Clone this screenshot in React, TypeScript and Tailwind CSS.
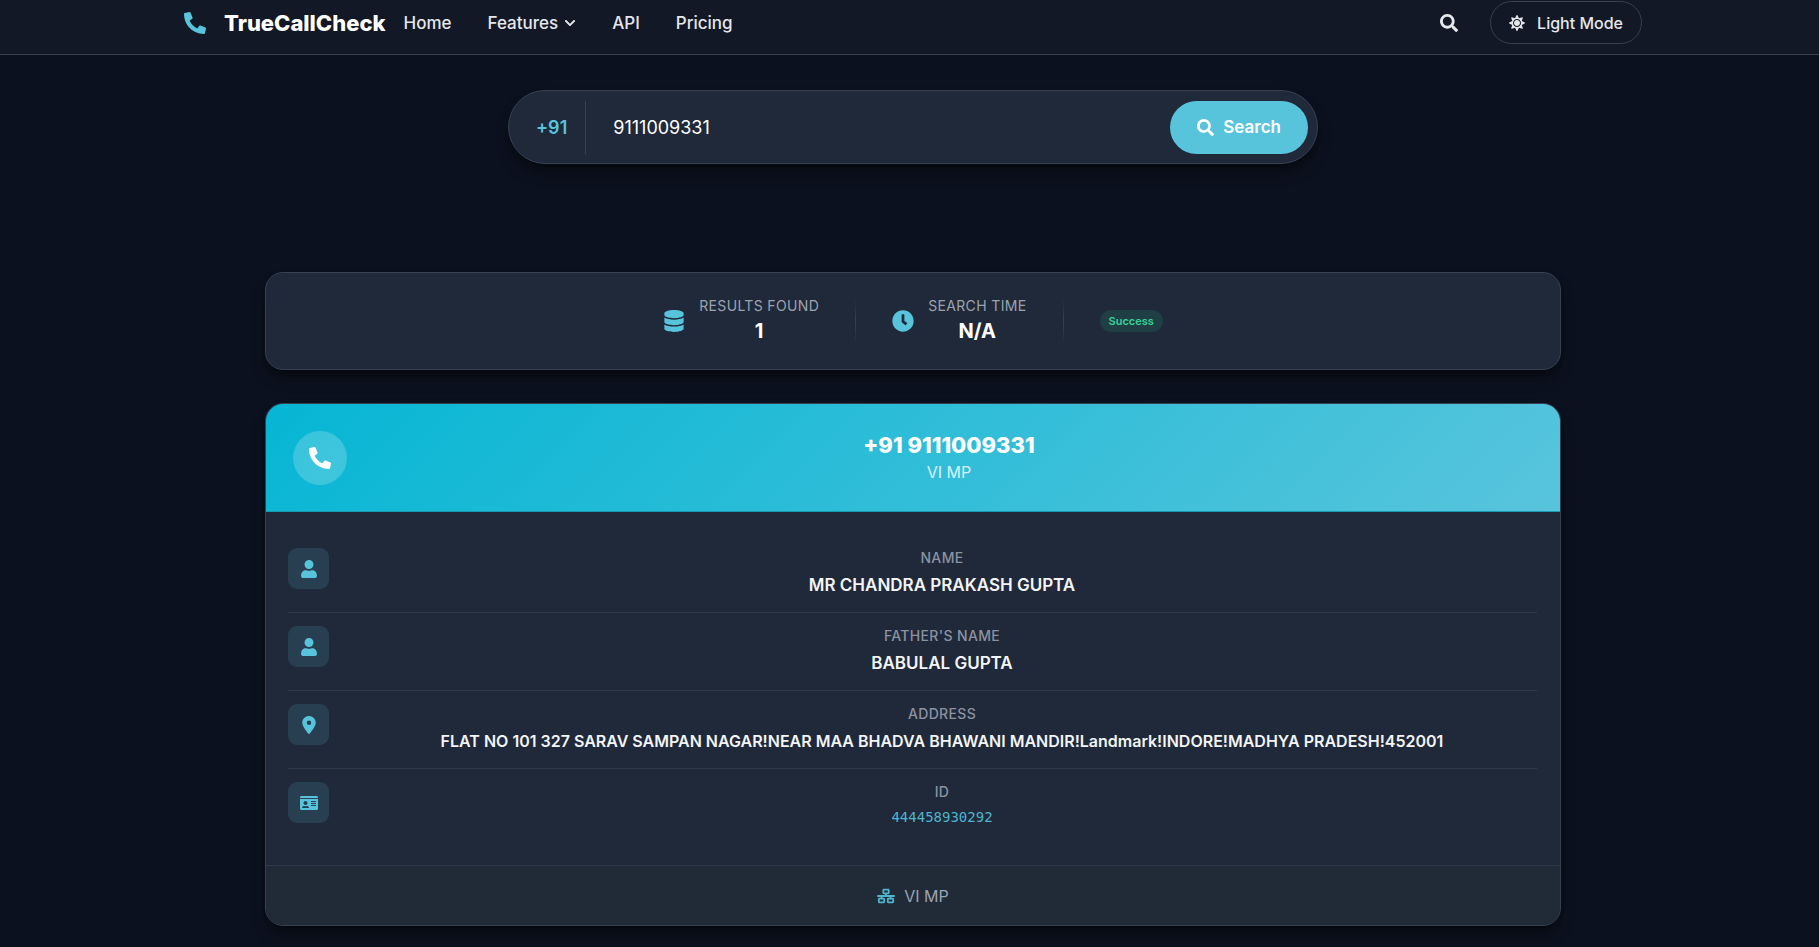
import { useState } from 'react'
import type { IconType } from 'react-icons'
import {
  FaChevronDown,
  FaClock,
  FaDatabase,
  FaIdCard,
  FaPhoneAlt,
  FaSearch,
  FaSun,
  FaUser,
} from 'react-icons/fa'
import { FaLocationDot, FaNetworkWired } from 'react-icons/fa6'

type DetailItem = {
  label: string
  value: string
  icon: IconType
  variant?: 'long' | 'mono'
}

const details: DetailItem[] = [
  { label: 'Name', value: 'MR CHANDRA PRAKASH GUPTA', icon: FaUser },
  { label: "Father's Name", value: 'BABULAL GUPTA', icon: FaUser },
  {
    label: 'Address',
    value: 'FLAT NO 101 327 SARAV SAMPAN NAGAR!NEAR MAA BHADVA BHAWANI MANDIR!Landmark!INDORE!MADHYA PRADESH!452001',
    icon: FaLocationDot,
    variant: 'long',
  },
  { label: 'ID', value: '444458930292', icon: FaIdCard, variant: 'mono' },
]

const valueStyles = {
  default: 'text-[17px] leading-[26px] font-semibold text-[#f3f4f6]',
  long: 'text-base leading-[26px] font-semibold text-[#f3f4f6]',
  mono: "font-['DejaVu_Sans_Mono',monospace] text-sm leading-[22px] text-[#4fb4cc]",
}

function Header() {
  return (
    <header className="border-b border-[#374151] bg-[#121826] pl-[7px]">
      <div className="mx-auto flex h-[54px] max-w-[1458px] items-start justify-between pt-px">
        <div className="flex h-[43px] items-center gap-[18px]">
          <a href="#" className="flex items-center gap-[18px] text-[22px] leading-8 font-extrabold text-white">
            <FaPhoneAlt className="text-[22px] text-[#58c4dc]" />
            TrueCallCheck
          </a>
          <nav className="flex items-center gap-9 text-[17px] leading-6 font-medium text-[#e5e7eb]">
            <a href="#">Home</a>
            <a href="#" className="flex items-center gap-1.5">
              Features
              <FaChevronDown className="text-xs" />
            </a>
            <a href="#">API</a>
            <a href="#">Pricing</a>
          </nav>
        </div>
        <div className="flex items-center gap-8 text-[#e5e7eb]">
          <button type="button" aria-label="Search">
            <FaSearch className="text-lg" />
          </button>
          <button
            type="button"
            className="flex h-[43px] items-center gap-3 rounded-full border border-[#374151] px-[18px] text-base font-medium"
          >
            <FaSun className="text-base" />
            Light Mode
          </button>
        </div>
      </div>
    </header>
  )
}

function SearchBar() {
  const [number, setNumber] = useState('9111009331')

  return (
    <form
      onSubmit={(e) => e.preventDefault()}
      className="mx-auto flex h-[74px] max-w-[810px] items-center rounded-full border border-[#374151] bg-[#1f293a] px-[9px] pt-[10px] pb-[9px] shadow-lg shadow-black/40"
    >
      <label
        htmlFor="phone"
        className="flex h-full items-center border-r border-[#374151] px-[18px] text-lg font-semibold text-[#58c4dc]"
      >
        +91
      </label>
      <input
        id="phone"
        type="tel"
        value={number}
        onChange={(e) => setNumber(e.target.value)}
        className="h-full min-w-0 flex-1 bg-transparent px-[27px] text-lg text-white outline-none"
      />
      <button
        type="submit"
        className="flex h-full items-center gap-[9px] rounded-full bg-[#58c4dc] px-[27px] text-[17px] font-semibold text-white"
      >
        <FaSearch />
        Search
      </button>
    </form>
  )
}

function Stat({ icon: Icon, label, value }: { icon: IconType; label: string; value: string }) {
  return (
    <div className="flex items-center gap-3.5">
      <Icon className="text-[22px] text-[#58c4dc]" />
      <div className="pb-0.5 text-center">
        <p className="text-sm leading-[22px] tracking-wide text-[#9ca3af] uppercase">{label}</p>
        <p className="text-xl leading-[28px] font-bold text-white">{value}</p>
      </div>
    </div>
  )
}

function StatDivider() {
  return <div className="h-[45px] w-px bg-linear-to-b from-transparent via-[#374151] to-transparent" />
}

function ResultStats() {
  return (
    <section className="flex h-[98px] items-center justify-center gap-9 rounded-[18px] border border-[#374151] bg-[#1f293a] shadow-lg shadow-black/40">
      <Stat icon={FaDatabase} label="Results Found" value="1" />
      <StatDivider />
      <Stat icon={FaClock} label="Search Time" value="N/A" />
      <StatDivider />
      <span className="rounded-full bg-[#1f3f44] px-[9px] text-[11px] leading-[22px] font-semibold text-[#34d399]">
        Success
      </span>
    </section>
  )
}

function DetailRow({ item }: { item: DetailItem }) {
  const Icon = item.icon

  return (
    <div className="flex items-start gap-[18px] border-b border-[#2f3b4b] pt-[13px] pb-3.5 last:border-b-0">
      <div className="flex size-[41px] items-center justify-center rounded-[9px] bg-[#283f52] text-lg text-[#58c4dc]">
        <Icon />
      </div>
      <dl className="flex-1 text-center">
        <dt className="text-sm leading-5 font-medium tracking-wide text-[#8b93a1] uppercase">{item.label}</dt>
        <dd className={`pt-1 ${valueStyles[item.variant ?? 'default']}`}>{item.value}</dd>
      </dl>
    </div>
  )
}

function ResultCard() {
  return (
    <article className="overflow-hidden rounded-[18px] border border-[#374151] bg-[#1f293a] shadow-lg shadow-black/40">
      <div className="flex h-[108px] items-center gap-[18px] border-b border-[#179bb2] bg-[linear-gradient(135deg,#06b6d4_0%,#58c4dc_100%)] px-[27px]">
        <div className="flex size-[54px] items-center justify-center rounded-full bg-white/20 text-[22px] text-white">
          <FaPhoneAlt />
        </div>
        <div className="flex-1 pb-px text-center">
          <h2 className="text-[22px] leading-[30px] font-extrabold text-white">+91 9111009331</h2>
          <p className="text-base leading-6 text-white/80">VI MP</p>
        </div>
      </div>
      <div className="py-[23px] pr-[23px] pl-[22px]">
        {details.map((item) => (
          <DetailRow key={item.label} item={item} />
        ))}
      </div>
      <div className="flex h-[60px] items-center justify-center gap-[9px] border-t border-[#2f3b4b] bg-[#212a37] text-base text-[#9ca3af]">
        <FaNetworkWired className="text-lg text-[#4fb4cc]" />
        VI MP
      </div>
    </article>
  )
}

export default function App() {
  return (
    <div className="min-h-screen bg-[#0b111e] font-['Inter',sans-serif]">
      <Header />
      <main className="pt-[35px] pl-[7px]">
        <SearchBar />
        <div className="mx-auto mt-[108px] flex max-w-[1296px] flex-col gap-[33px]">
          <ResultStats />
          <ResultCard />
        </div>
      </main>
    </div>
  )
}
